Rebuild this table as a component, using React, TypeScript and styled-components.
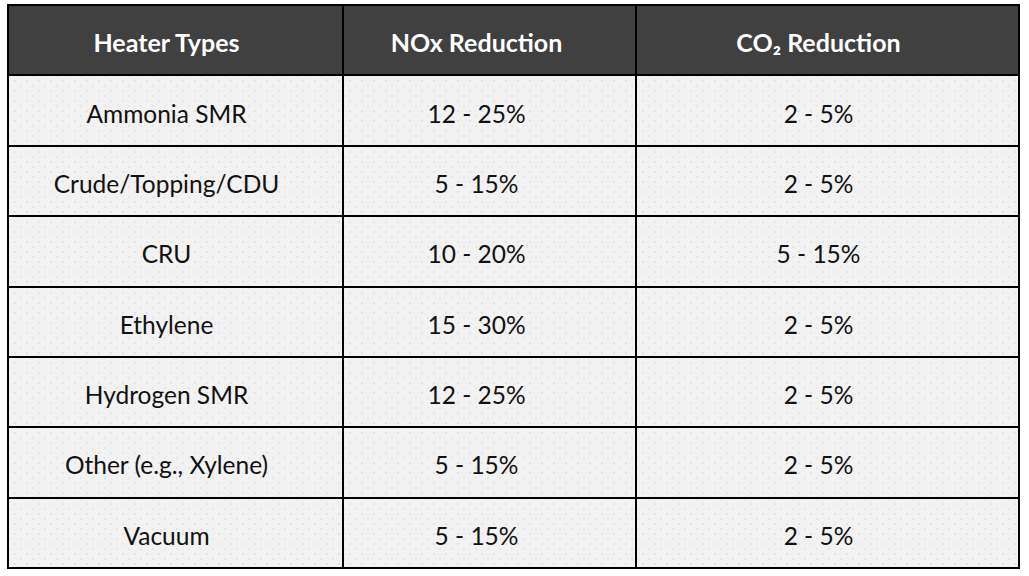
import React from 'react';
import styled, {createGlobalStyle} from 'styled-components';

const GlobalStyle = createGlobalStyle`
    html, body {
        margin: 0;
        padding: 0;
        background: #ffffff;
    }
    body {
        font-family: Lato, "Liberation Sans", sans-serif;
    }
`;

const Page = styled.div`
    padding: 4px 0 0 7px;
`;

const Grid = styled.div`
    display: grid;
    grid-template-columns: 333px 291px 381px;
    grid-template-rows: repeat(8, 1fr);
    gap: 2px;
    padding: 2px;
    width: 1013px;
    height: 565px;
    box-sizing: border-box;
    background: #000000;
`;

// text in the source sits a little left of each column's centre
const shifts = [18, 26, 18];

const HeadCell = styled.div<{col: number}>`
    display: flex;
    align-items: center;
    justify-content: center;
    background: #404040;
    color: #ffffff;
    font-weight: 700;
    font-size: 25px;
    padding-top: 4px;
    padding-right: ${({col}) => shifts[col]}px;
`;

const Cell = styled.div<{col: number}>`
    display: flex;
    align-items: center;
    justify-content: center;
    padding-top: 5px;
    padding-right: ${({col}) => shifts[col]}px;
    color: #111111;
    font-size: 24.5px;
    background-color: #f2f2f2;
    background-image:
        radial-gradient(circle, #dcdcdc 0.6px, transparent 0.9px),
        radial-gradient(circle, #e0e0e0 0.6px, transparent 0.9px);
    background-size: 12px 10px, 12px 10px;
    background-position: 0 0, 6px 5px;
`;

const rows: Array<[string, string, string]> = [
    ['Ammonia SMR', '12 - 25%', '2 - 5%'],
    ['Crude/Topping/CDU', '5 - 15%', '2 - 5%'],
    ['CRU', '10 - 20%', '5 - 15%'],
    ['Ethylene', '15 - 30%', '2 - 5%'],
    ['Hydrogen SMR', '12 - 25%', '2 - 5%'],
    ['Other (e.g., Xylene)', '5 - 15%', '2 - 5%'],
    ['Vacuum', '5 - 15%', '2 - 5%'],
];

const App: React.FC = () => {
    return (
        <Page>
            <GlobalStyle/>
            <Grid>
                <HeadCell col={0}>Heater Types</HeadCell>
                <HeadCell col={1}>NOx Reduction</HeadCell>
                <HeadCell col={2}>CO₂ Reduction</HeadCell>
                {rows.map((row) => (
                    <React.Fragment key={row[0]}>
                        {row.map((text, i) => (
                            <Cell key={i} col={i}>{text}</Cell>
                        ))}
                    </React.Fragment>
                ))}
            </Grid>
        </Page>
    );
};

export default App;
